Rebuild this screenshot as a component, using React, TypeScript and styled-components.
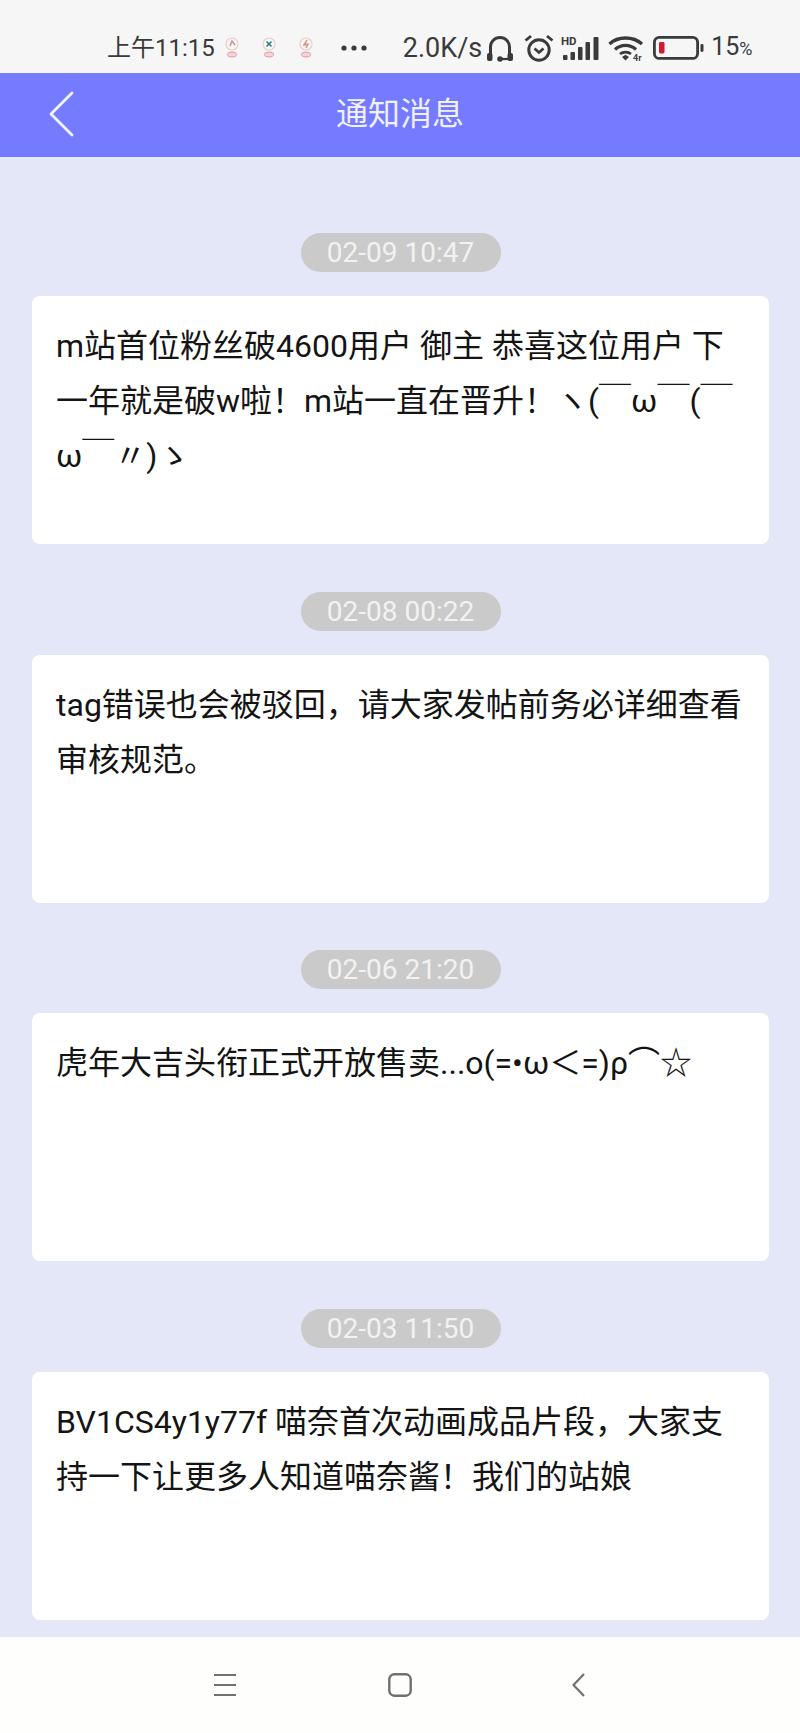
import React from "react";
import styled, { createGlobalStyle } from "styled-components";

const Global = createGlobalStyle`
  html, body { margin: 0; padding: 0; background: #e4e7f8; }
  * { box-sizing: border-box; }
`;

const FONT = `Roboto, "Noto Sans CJK SC", "Noto Sans", sans-serif`;

const Page = styled.div`
  width: 800px;
  height: 1733px;
  display: flex;
  flex-direction: column;
  overflow: hidden;
  background: #e4e7f8;
  font-family: ${FONT};
`;

const StatusBar = styled.div`
  height: 73px;
  flex: none;
  background: #f6f6f6;
  display: flex;
  align-items: center;
  padding: 23px 0 0 107px;
  color: #3a3a3a;
`;

const StatusText = styled.span<{ $ml?: number; $size?: number }>`
  font-size: ${(p) => p.$size ?? 24}px;
  line-height: 30px;
  margin-left: ${(p) => p.$ml ?? 0}px;
  white-space: nowrap;
`;

const Percent = styled.span`
  font-size: 18px;
`;

const StatusIcon = styled.svg<{ $ml: number }>`
  flex: none;
  margin-left: ${(p) => p.$ml}px;
`;

const Header = styled.header`
  height: 84px;
  flex: none;
  background: #757bff;
  display: flex;
  align-items: center;
  justify-content: center;
  padding-bottom: 9px;
  position: relative;
`;

const BackIcon = styled.svg`
  position: absolute;
  left: 48px;
  top: 17px;
`;

const Title = styled.h1`
  margin: 0;
  font-size: 32px;
  font-weight: 400;
  color: #f0f0ff;
`;

const List = styled.main`
  flex: 1;
  min-height: 0;
  overflow: hidden;
  padding: 76px 31px 0 32px;
  display: flex;
  flex-direction: column;
  gap: 47.5px;
`;

const Item = styled.section`
  display: flex;
  flex-direction: column;
  align-items: center;
  gap: 24px;
`;

const Stamp = styled.div`
  width: 200px;
  height: 39px;
  border-radius: 20px;
  background: #cacaca;
  color: #f2f2f2;
  font-size: 28px;
  line-height: 39px;
  text-align: center;
`;

const Card = styled.article`
  align-self: stretch;
  height: 248px;
  background: #fff;
  border-radius: 8px;
  padding: 23px 20px 0 24px;
  color: #141414;
  font-size: 32px;
  line-height: 55px;
  white-space: nowrap;
`;

const NavBar = styled.nav`
  height: 96px;
  flex: none;
  background: #fefefc;
  display: flex;
  align-items: flex-start;
  gap: 152px;
  padding: 36px 0 0 214px;
`;

const NavBack = styled.svg`
  margin-left: 8px;
`;

const notes = [
  {
    time: "02-09 10:47",
    lines: ["m站首位粉丝破4600用户 御主 恭喜这位用户 下", "一年就是破w啦！m站一直在晋升！ヽ(￣ω￣(￣", "ω￣〃)ゝ"],
  },
  { time: "02-08 00:22", lines: ["tag错误也会被驳回，请大家发帖前务必详细查看", "审核规范。"] },
  { time: "02-06 21:20", lines: ["虎年大吉头衔正式开放售卖...o(=•ω＜=)ρ⌒☆"] },
  { time: "02-03 11:50", lines: ["BV1CS4y1y77f 喵奈首次动画成品片段，大家支", "持一下让更多人知道喵奈酱！我们的站娘"] },
];

const Bulb = ({ ml, mark, color }: { ml: number; mark: string; color: string }) => (
  <StatusIcon $ml={ml} width="16" height="22" viewBox="0 0 16 22">
    <circle cx="8" cy="7" r="6" fill="#fbf4f2" stroke="#e2d2ce" strokeWidth="1.2" />
    <path d={mark} stroke={color} strokeWidth="1.5" fill="none" />
    <ellipse cx="8" cy="17.5" rx="4.6" ry="2.4" fill="#f5d3d6" stroke="#dd9ea5" strokeWidth="1" />
  </StatusIcon>
);

export default function App() {
  return (
    <Page>
      <Global />
      <StatusBar>
        <StatusText>上午11:15</StatusText>
        <Bulb ml={9} mark="M6 9 L8 4 L11 8" color="#b99" />
        <Bulb ml={21} mark="M5.5 4.5 L10.5 9.5 M10.5 4.5 L5.5 9.5" color="#1f7f8c" />
        <Bulb ml={21} mark="M9 3 L6 8 L10 7 L8 11" color="#c98" />
        <StatusIcon $ml={26} width="28" height="8" viewBox="0 0 28 8">
          <circle cx="4" cy="4" r="2.6" fill="#3a3a3a" />
          <circle cx="14" cy="4" r="2.6" fill="#3a3a3a" />
          <circle cx="24" cy="4" r="2.6" fill="#3a3a3a" />
        </StatusIcon>
        <StatusText $ml={35} $size={27}>2.0K/s</StatusText>
        <StatusIcon $ml={4} width="28" height="27" viewBox="0 0 28 27">
          <path d="M4.5 21 V12 a9.5 9.5 0 0 1 19 0 V21" fill="none" stroke="#3a3a3a" strokeWidth="3" />
          <rect x="1" y="18" width="5.5" height="8" rx="2" fill="#3a3a3a" />
          <rect x="21.5" y="18" width="5.5" height="8" rx="2" fill="#3a3a3a" />
          <circle cx="14" cy="24" r="2.8" fill="#3a3a3a" />
          <path d="M14 24 H24" stroke="#3a3a3a" strokeWidth="2.2" />
        </StatusIcon>
        <StatusIcon $ml={10} width="30" height="28" viewBox="0 0 30 28">
          <circle cx="15" cy="16" r="10.2" fill="none" stroke="#3a3a3a" strokeWidth="3" />
          <path d="M10.5 14.5 L15 18.5 L19.5 14.5" fill="none" stroke="#3a3a3a" strokeWidth="2.6" />
          <path d="M1.5 6.5 L7 2 M28.5 6.5 L23 2" stroke="#3a3a3a" strokeWidth="2.8" />
        </StatusIcon>
        <StatusIcon $ml={7} width="38" height="26" viewBox="0 0 38 26">
          <text x="0" y="9.5" fontFamily="Roboto, sans-serif" fontWeight="700" fontSize="11.5" fill="#3a3a3a">HD</text>
          <rect x="2" y="20" width="4.5" height="5" rx="1" fill="#3a3a3a" />
          <rect x="9.5" y="17" width="4.5" height="8" rx="1" fill="#3a3a3a" />
          <rect x="17" y="12" width="4.5" height="13" rx="1" fill="#3a3a3a" />
          <rect x="24.5" y="7" width="4.5" height="18" rx="1" fill="#3a3a3a" />
          <rect x="32.5" y="2" width="5" height="23" rx="1" fill="#3a3a3a" />
        </StatusIcon>
        <StatusIcon $ml={9} width="36" height="26" viewBox="0 0 36 26">
          <path d="M1.5 9 C10 1 25 1 34 9" fill="none" stroke="#3a3a3a" strokeWidth="3.4" />
          <path d="M7 14.5 C13 9 22 9 28 14.5" fill="none" stroke="#3a3a3a" strokeWidth="3.2" />
          <path d="M12 19 C15 16.5 20 16.5 23 19" fill="none" stroke="#3a3a3a" strokeWidth="2.8" />
          <path d="M14 22 L17.5 19.8 L21 22 L17.5 25.5 Z" fill="#3a3a3a" />
          <text x="25" y="25.5" fontFamily="Roboto, sans-serif" fontWeight="700" fontSize="9" fill="#3a3a3a">4r</text>
        </StatusIcon>
        <StatusIcon $ml={9} width="51" height="24" viewBox="0 0 51 24">
          <rect x="1.4" y="1.4" width="43.2" height="21" rx="5" fill="#f6f6f6" stroke="#3a3a3a" strokeWidth="2.8" />
          <rect x="6" y="6" width="5.5" height="11.5" rx="1.4" fill="#d4182f" />
          <rect x="47.5" y="8" width="3" height="8" rx="1.4" fill="#3a3a3a" />
        </StatusIcon>
        <StatusText $ml={7} $size={25}>15<Percent>%</Percent></StatusText>
      </StatusBar>
      <Header>
        <BackIcon width="26" height="48" viewBox="0 0 26 48">
          <path d="M24 3 L3 24 L24 45" fill="none" stroke="#f4f4ff" strokeWidth="2.8" strokeLinecap="round" strokeLinejoin="round" />
        </BackIcon>
        <Title>通知消息</Title>
      </Header>
      <List>
        {notes.map((n) => (
          <Item key={n.time}>
            <Stamp>{n.time}</Stamp>
            <Card>
              {n.lines.map((l) => (
                <div key={l}>{l}</div>
              ))}
            </Card>
          </Item>
        ))}
      </List>
      <NavBar>
        <svg width="22" height="24" viewBox="0 0 22 24">
          <path d="M0 2 H22 M0 12 H22 M0 22 H22" stroke="#707070" strokeWidth="2.2" />
        </svg>
        <svg width="24" height="24" viewBox="0 0 24 24">
          <rect x="1.3" y="1.3" width="21.4" height="21.4" rx="5" fill="none" stroke="#707070" strokeWidth="2.4" />
        </svg>
        <NavBack width="13" height="24" viewBox="0 0 13 24">
          <path d="M12 1 L1.5 12 L12 23" fill="none" stroke="#707070" strokeWidth="2.2" />
        </NavBack>
      </NavBar>
    </Page>
  );
}
